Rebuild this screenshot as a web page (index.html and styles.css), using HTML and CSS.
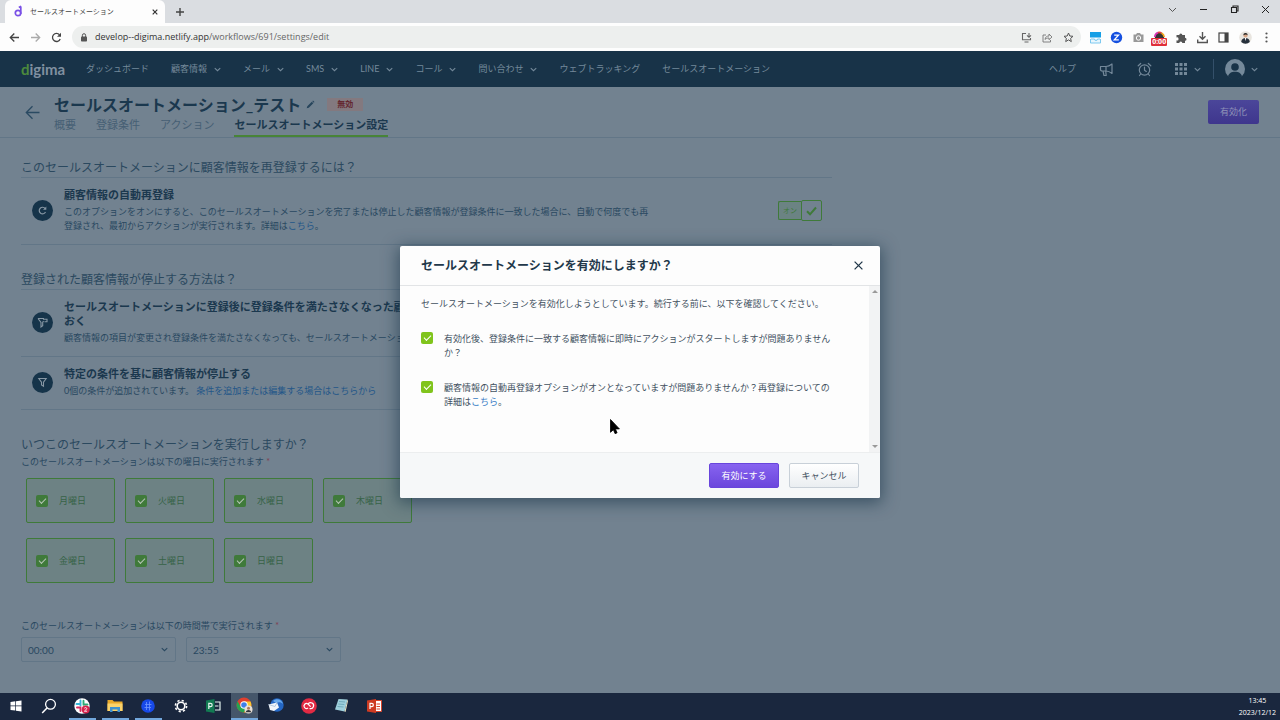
FILE: index.html
```html
<!DOCTYPE html>
<html lang="ja">
<head>
<meta charset="utf-8">
<title>セールスオートメーション</title>
<link rel="stylesheet" href="styles.css">
</head>
<body>
<svg class="defs" aria-hidden="true">
  <symbol id="chev" viewBox="0 0 8 8"><path d="M1.2 2.6 4 5.4 6.8 2.6" fill="none" stroke="currentColor" stroke-width="1.2" stroke-linecap="round"/></symbol>
</svg>

<header class="browser">
  <div class="tabstrip">
    <div class="tab">
      <svg width="9" height="13" viewBox="0 0 9 13"><circle cx="4" cy="8" r="2.7" fill="none" stroke="#7a50e6" stroke-width="1.7"/><path d="M6.8 1.5V9M4.800 2.600l2.400-1.400" stroke="#7a50e6" stroke-width="1.7" fill="none"/></svg>
      <span class="tab-title">セールスオートメーション</span>
      <button class="icon-btn" aria-label="タブを閉じる"><svg width="8" height="8" viewBox="0 0 8 8"><path d="M1.7 1.7l4.6 4.6M6.3 1.7 1.7 6.3" stroke="#333" stroke-width="1.2"/></svg></button>
    </div>
    <button class="icon-btn new-tab" aria-label="新しいタブ"><svg width="10" height="10" viewBox="0 0 10 10"><path d="M5 1v8M1 5h8" stroke="#444" stroke-width="1.4"/></svg></button>
    <div class="window-controls">
      <button class="icon-btn" aria-label="タブを検索"><svg width="9" height="9" viewBox="0 0 9 9"><path d="M1 3l3.500 3.500L8 3" fill="none" stroke="#555" stroke-width="1"/></svg></button>
      <button class="icon-btn" aria-label="最小化"><svg width="9" height="9" viewBox="0 0 9 9"><path d="M1 4.500h7" stroke="#222" stroke-width="1"/></svg></button>
      <button class="icon-btn" aria-label="元に戻す"><svg width="9" height="9" viewBox="0 0 9 9"><path d="M1.500 2.500h5v5h-5zM3 2.500V1h5v5H6.500" fill="none" stroke="#222" stroke-width="1.1"/></svg></button>
      <button class="icon-btn" aria-label="閉じる"><svg width="9" height="9" viewBox="0 0 9 9"><path d="M1 1l7 7M8 1 1 8" stroke="#222" stroke-width="1"/></svg></button>
    </div>
  </div>
  <div class="toolbar">
    <div class="nav-buttons">
      <button class="icon-btn" aria-label="戻る"><svg width="11" height="11" viewBox="0 0 11 11"><path d="M10 5.500H1.500M5.300 1.500l-4 4 4 4" fill="none" stroke="#444" stroke-width="1.3"/></svg></button>
      <button class="icon-btn" aria-label="進む"><svg width="11" height="11" viewBox="0 0 11 11"><path d="M1 5.500h8.500M5.700 1.500l4 4-4 4" fill="none" stroke="#aaa" stroke-width="1.3"/></svg></button>
      <button class="icon-btn" aria-label="再読み込み"><svg width="11" height="11" viewBox="0 0 11 11"><path d="M9.200 7A4 4 0 1 1 8.500 2.800" fill="none" stroke="#444" stroke-width="1.3"/><path d="M10 .7v4H6z" fill="#444"/></svg></button>
    </div>
    <div class="omnibox">
      <svg width="8" height="9" viewBox="0 0 8 9"><rect x="1" y="3.500" width="6" height="5" rx=".8" fill="#555"/><path d="M2.400 4V2.300a1.600 1.600 0 0 1 3.200 0V4" fill="none" stroke="#555" stroke-width="1"/></svg>
      <span class="url"><span class="host">develop--digima.netlify.app</span>/workflows/691/settings/edit</span>
      <div class="omni-icons">
        <svg width="11" height="11" viewBox="0 0 11 11"><path d="M5 1.500H1.500v6.300h8V6M3.500 10h4M8 1v4M6 3.300l2 2 2-2" fill="none" stroke="#666" stroke-width="1.1"/></svg>
        <svg width="11" height="11" viewBox="0 0 11 11"><path d="M4 3H1v7h7.500V8M3 7.500C3.300 4.800 5 4 7 4V2l3 3-3 2.700V6C5.200 6 4 6.300 3 7.500z" fill="none" stroke="#777" stroke-width=".9"/></svg>
        <svg width="11" height="11" viewBox="0 0 11 11"><path d="M5.500 1l1.300 3 3.200.3-2.400 2.100.7 3.200-2.800-1.700-2.800 1.700.7-3.200L1 4.300 4.200 4z" fill="none" stroke="#555" stroke-width="1"/></svg>
      </div>
    </div>
    <div class="extensions">
      <svg width="13" height="13" viewBox="0 0 13 13"><rect x="1" y="1" width="11" height="5.500" fill="#169fe6"/><path d="M1.500 8v4h10V8M2 8h3.500a1.500 1.500 0 0 0 3 0H11" fill="#e8f6fd" stroke="#6fc3ee" stroke-width=".9"/></svg>
      <svg width="13" height="13" viewBox="0 0 13 13"><circle cx="6.500" cy="6.500" r="5.700" fill="#1650e0"/><path d="M4.200 4.200h4.300L4.300 8.800h4.500" fill="none" stroke="#fff" stroke-width="1.300"/></svg>
      <svg width="13" height="13" viewBox="0 0 13 13"><path d="M1.500 3.500H4L5 2h3l1 1.500h2.500V11h-10z" fill="#999"/><circle cx="6.500" cy="7" r="2.200" fill="none" stroke="#fff"/></svg>
      <div class="recorder">
        <svg width="13" height="13" viewBox="0 0 13 13"><circle cx="6.500" cy="6" r="4.700" fill="#333"/><path d="M1.800 6a4.700 4.700 0 0 1 3.200-4.400" stroke="#d935b4" fill="none" stroke-width="1.700"/><path d="M5 1.600a5 5 0 0 1 3.500.3" stroke="#e9413b" fill="none" stroke-width="1.700"/><path d="M8.500 1.900A5 5 0 0 1 11.200 6" stroke="#f3a51c" fill="none" stroke-width="1.700"/></svg>
        <span class="rec-time">0:00</span>
      </div>
      <svg width="13" height="13" viewBox="0 0 13 13"><path d="M1.500 4h2.800a1.500 1.500 0 1 1 3 0H10v2.700a1.500 1.500 0 1 1 0 3V12H7.300a1.500 1.500 0 1 0-3 0H1.500V9.300a1.500 1.500 0 1 0 0-2.800z" fill="#555"/></svg>
      <svg width="13" height="13" viewBox="0 0 13 13"><path d="M6.500 1v7M3.500 5.300l3 3 3-3M1.700 8.500v3h9.600v-3" fill="none" stroke="#555" stroke-width="1.400"/></svg>
      <svg width="13" height="13" viewBox="0 0 13 13"><rect x="2" y="2" width="9" height="9" fill="none" stroke="#444" stroke-width="1.200"/><path d="M7.500 2H11v9H7.500z" fill="#444"/></svg>
      <svg width="13" height="13" viewBox="0 0 13 13"><circle cx="6.500" cy="6.500" r="6.300" fill="#e8e5df"/><path d="M2.200 11c.5-3 2-4 4.300-4s4 1 4.300 4a6.300 6.300 0 0 1-8.600 0z" fill="#26303b"/><circle cx="6.500" cy="4.500" r="2.100" fill="#d8a889"/><path d="M4.300 4.300a2.200 2.200 0 0 1 4.400 0C7.500 3 6 3.300 4.300 4.300z" fill="#222"/><path d="M5.800 7h1.400l-.5 3z" fill="#fff"/></svg>
      <svg width="13" height="13" viewBox="0 0 13 13" fill="#555"><circle cx="6.500" cy="2.500" r="1.100"/><circle cx="6.500" cy="6.500" r="1.100"/><circle cx="6.500" cy="10.500" r="1.100"/></svg>
    </div>
  </div>
</header>

<div class="app">
  <nav class="app-nav">
    <a class="logo" href="#"><span class="logo-d">d</span>igima</a>
    <div class="menu">
      <a href="#">ダッシュボード</a>
      <a href="#">顧客情報<svg class="chev"><use href="#chev"/></svg></a>
      <a href="#">メール<svg class="chev"><use href="#chev"/></svg></a>
      <a href="#">SMS<svg class="chev"><use href="#chev"/></svg></a>
      <a href="#">LINE<svg class="chev"><use href="#chev"/></svg></a>
      <a href="#">コール<svg class="chev"><use href="#chev"/></svg></a>
      <a href="#">問い合わせ<svg class="chev"><use href="#chev"/></svg></a>
      <a href="#">ウェブトラッキング</a>
      <a href="#">セールスオートメーション</a>
    </div>
    <div class="tools">
      <a href="#">ヘルプ</a>
      <a href="#" aria-label="お知らせ"><svg width="15" height="15" viewBox="0 0 15 15" fill="none" stroke="currentColor" stroke-width="1.200" stroke-linejoin="round"><path d="M1.500 4.500H7c2.300 0 4.500-1.300 6-2.500v9.500c-1.500-1.200-3.700-2.500-6-2.500H2.500L1.500 8zM7 4.500V9M4 9l1 4.500h2.200L6.700 9"/></svg></a>
      <a href="#" aria-label="リマインダー"><svg width="15" height="15" viewBox="0 0 15 15" fill="none" stroke="currentColor" stroke-width="1.200" stroke-linecap="round"><circle cx="7.500" cy="8" r="5.200"/><path d="M7.500 5v3.200l1.800 1.200M1.200 3.800 3.700 1.500M13.800 3.800l-2.500-2.300M3.700 12l-1.200 1.500M11.300 12l1.200 1.500"/></svg></a>
      <a href="#" aria-label="アプリ"><svg width="12" height="12" viewBox="0 0 12 12" fill="currentColor"><path d="M0 0h3v3H0zM4.500 0h3v3h-3zM9 0h3v3H9zM0 4.500h3v3H0zM4.500 4.500h3v3h-3zM9 4.500h3v3H9zM0 9h3v3H0zM4.500 9h3v3h-3zM9 9h3v3H9z"/></svg><svg class="chev"><use href="#chev"/></svg></a>
      <a class="account" href="#" aria-label="アカウント"><svg width="20" height="20" viewBox="0 0 20 20"><circle cx="10" cy="10" r="10" fill="currentColor"/><circle cx="10" cy="8" r="3.800" fill="#183348"/><path d="M3 17.500c1-3.500 3.500-4.800 7-4.800s6 1.300 7 4.800L13 20H7z" fill="#183348"/></svg><svg class="chev"><use href="#chev"/></svg></a>
    </div>
  </nav>

  <div class="page-head">
    <a class="back" href="#" aria-label="一覧に戻る"><svg width="15" height="15" viewBox="0 0 15 15"><path d="M14.500 7.500H1.500M7.500 1.200l-6.200 6.300 6.200 6.300" fill="none" stroke="#2a4a62" stroke-width="1.300"/></svg></a>
    <div class="head-main">
      <div class="title-row">
        <h1>セールスオートメーション_テスト</h1>
        <button class="icon-btn" aria-label="名前を編集"><svg width="9" height="9" viewBox="0 0 9 9"><path d="M.7 8.300l.6-2.100 4.500-4.500 1.500 1.500-4.500 4.500zM6.300 1.200 7 .5l1.500 1.500-.7.700z" fill="#27455c"/></svg></button>
        <span class="badge">無効</span>
      </div>
      <div class="tabs">
        <a href="#">概要</a>
        <a href="#">登録条件</a>
        <a href="#">アクション</a>
        <a class="active" href="#">セールスオートメーション設定</a>
      </div>
    </div>
    <button class="enable">有効化</button>
  </div>

  <main class="content">
    <section>
      <h2 class="ruled">このセールスオートメーションに顧客情報を再登録するには？</h2>
      <div class="row">
        <span class="disc"><svg width="11" height="11" viewBox="0 0 11 11"><path d="M8.500 7A3.300 3.300 0 1 1 8.200 3.600" fill="none" stroke="currentColor" stroke-width="1.200"/><path d="M9.300 1.500v3.300H6z" fill="currentColor"/></svg></span>
        <div class="row-text">
          <h3>顧客情報の自動再登録</h3>
          <p>このオプションをオンにすると、このセールスオートメーションを完了または停止した顧客情報が登録条件に一致した場合に、自動で何度でも再登録され、最初からアクションが実行されます。詳細は<a href="#">こちら</a>。</p>
        </div>
        <button class="switch" role="switch" aria-checked="true" aria-label="顧客情報の自動再登録"><span class="switch-label">オン</span><span class="knob"><svg width="11" height="10" viewBox="0 0 11 10"><path d="M1 5.300 4 8.300 10 1.500" fill="none" stroke="currentColor" stroke-width="2"/></svg></span></button>
      </div>
    </section>

    <section>
      <h2 class="ruled">登録された顧客情報が停止する方法は？</h2>
      <div class="row">
        <span class="disc"><svg width="11" height="11" viewBox="0 0 11 11" fill="none" stroke="currentColor" stroke-width="1.100"><path d="M1 1.500h6M1 1.500l3 4V10l1.700-1.200V5.500L6.500 4M6 2.200h4v2.600H7.500"/></svg></span>
        <div class="row-text">
          <h3>セールスオートメーションに登録後に登録条件を満たさなくなった顧客情報をそのままセールスオートメーションに残しておく</h3>
          <p>顧客情報の項目が変更され登録条件を満たさなくなっても、セールスオートメーションを継続します。</p>
        </div>
      </div>
      <div class="row">
        <span class="disc"><svg width="11" height="11" viewBox="0 0 11 11"><path d="M1.800 1.500h7.400L6.500 5.300v4L4.500 8V5.300z" fill="none" stroke="currentColor" stroke-width="1.100"/></svg></span>
        <div class="row-text">
          <h3>特定の条件を基に顧客情報が停止する</h3>
          <p>0個の条件が追加されています。 <a href="#">条件を追加または編集する場合はこちらから</a></p>
        </div>
      </div>
    </section>

    <section>
      <h2>いつこのセールスオートメーションを実行しますか？</h2>
      <p class="field-label">このセールスオートメーションは以下の曜日に実行されます <span class="req">*</span></p>
      <div class="days">
        <label class="day"><input type="checkbox" class="check" checked>月曜日</label>
        <label class="day"><input type="checkbox" class="check" checked>火曜日</label>
        <label class="day"><input type="checkbox" class="check" checked>水曜日</label>
        <label class="day"><input type="checkbox" class="check" checked>木曜日</label>
        <label class="day"><input type="checkbox" class="check" checked>金曜日</label>
        <label class="day"><input type="checkbox" class="check" checked>土曜日</label>
        <label class="day"><input type="checkbox" class="check" checked>日曜日</label>
      </div>
      <p class="field-label" id="hours">このセールスオートメーションは以下の時間帯で実行されます <span class="req">*</span></p>
      <div class="times">
        <div class="select"><select aria-labelledby="hours"><option>00:00</option></select><svg class="chev"><use href="#chev"/></svg></div>
        <div class="select"><select aria-labelledby="hours"><option>23:55</option></select><svg class="chev"><use href="#chev"/></svg></div>
      </div>
    </section>
  </main>

  <div class="overlay">
    <div class="dialog" role="dialog" aria-modal="true" aria-labelledby="dlg-title">
      <div class="dialog-head">
        <h2 id="dlg-title">セールスオートメーションを有効にしますか？</h2>
        <button class="icon-btn" aria-label="閉じる"><svg width="9" height="9" viewBox="0 0 9 9"><path d="M.6.6l7.800 7.800M8.400.6.6 8.400" stroke="#22384a" stroke-width="1.300"/></svg></button>
      </div>
      <div class="dialog-body">
        <div class="dialog-text">
          <p>セールスオートメーションを有効化しようとしています。続行する前に、以下を確認してください。</p>
          <div class="confirm"><input type="checkbox" class="check" id="c1" checked><label for="c1">有効化後、登録条件に一致する顧客情報に即時にアクションがスタートしますが問題ありませんか？</label></div>
          <div class="confirm"><input type="checkbox" class="check" id="c2" checked><label for="c2">顧客情報の自動再登録オプションがオンとなっていますが問題ありませんか？再登録についての詳細は<a href="#">こちら</a>。</label></div>
        </div>
        <div class="scrollbar"><span class="up"></span><span class="down"></span></div>
      </div>
      <div class="dialog-foot">
        <button class="btn primary">有効にする</button>
        <button class="btn">キャンセル</button>
      </div>
    </div>
    <svg class="cursor" width="11" height="16" viewBox="0 0 11 16"><path d="M.5.5v12.800l2.900-2.600 1.700 4 2-.9-1.700-3.900h4z" fill="#000" stroke="#000" stroke-width=".8"/></svg>
  </div>
</div>

<footer class="taskbar">
  <div class="apps">
    <button aria-label="スタート"><svg width="12" height="12" viewBox="0 0 12 12" fill="#fff"><path d="M.5 2 5.300 1.300v4.300H.5zM6 1.200l5.500-.8v5.200H6zM.5 6.300h4.800v4.300L.5 10zM6 6.300h5.500v5.200L6 10.700z"/></svg></button>
    <button aria-label="検索"><svg width="16" height="16" viewBox="0 0 16 16"><circle cx="9.500" cy="6.300" r="4.900" fill="none" stroke="#fff" stroke-width="1.300"/><path d="M6 10 1.200 15" stroke="#fff" stroke-width="1.500"/></svg></button>
    <button class="running" aria-label="Slack"><svg width="16" height="16" viewBox="0 0 16 16"><circle cx="8" cy="8" r="7.700" fill="#fff"/><path d="M6.500 2.500v5M2.500 6H6" stroke="#36b5d8" stroke-width="1.900" stroke-linecap="round"/><path d="M9.500 2.800v4M10 6.500h3.500" stroke="#2bab76" stroke-width="1.900" stroke-linecap="round"/><path d="M3 9.500h3.500v3.500" stroke="#d62a5c" stroke-width="1.900" fill="none" stroke-linecap="round"/><circle cx="11.700" cy="11.500" r="4" fill="#d7234d"/><path d="M10.300 10.300c.8-1.200 2.700-.8 2.300.5-.2.700-1.300 1.500-2.200 2.400h2.700" fill="none" stroke="#fff" stroke-width=".9"/></svg></button>
    <button class="running" aria-label="エクスプローラー"><svg width="16" height="14" viewBox="0 0 16 14"><path d="M.5 1h5l1.500 1.500h8.500V12H.5z" fill="#e9a92b"/><path d="M.5 4.500h15V12H.5z" fill="#fbd36b"/><path d="M3 13V8h10v5h-2.500v-2.500h-5V13z" fill="#3e91cf"/></svg></button>
    <button class="running" aria-label="通話"><svg width="14" height="14" viewBox="0 0 14 14"><circle cx="7" cy="7" r="6.800" fill="#1749e8"/><path d="M5.500 3v8M8.500 2.500v9M4 5.500h6.500M3.500 8.500H10" stroke="#6f96ff" stroke-width=".8"/></svg></button>
    <button aria-label="設定"><svg width="14" height="14" viewBox="0 0 14 14" fill="none" stroke="#fff"><circle cx="7" cy="7" r="3.800" stroke-width="1.600"/><circle cx="7" cy="7" r="5.600" stroke-width="1.600" stroke-dasharray="2.200 2.200"/></svg></button>
    <button aria-label="Project"><svg width="15" height="14" viewBox="0 0 15 14"><path d="M0 1.500 8.500 0v14L0 12.500z" fill="#127a52"/><path d="M2.800 10V4.300h1.700a1.600 1.600 0 0 1 0 3.300H3M9 3h5v8H9M9 7h3.500" fill="none" stroke="#e4f5ee" stroke-width="1.200"/></svg></button>
    <button class="running current" aria-label="Chrome"><svg width="17" height="17" viewBox="0 0 17 17"><circle cx="8" cy="8" r="7.500" fill="#e0402f"/><path d="M1.500 4.300A7.500 7.500 0 0 0 8 15.500L11.300 9.800 4.700 9.800z" fill="#27a351"/><path d="M8 15.500A7.500 7.500 0 0 0 14.500 4.500H8l3.300 5.300z" fill="#f9c82e"/><circle cx="8" cy="8" r="3.700" fill="#fff"/><circle cx="8" cy="8" r="2.800" fill="#3d7fe8"/><circle cx="12.500" cy="12.500" r="4" fill="#e7e0d7"/><circle cx="12.500" cy="11.300" r="1.500" fill="#ab7556"/><path d="M9.800 15.200c.4-3 4.900-3 5.400 0z" fill="#30343b"/></svg></button>
    <button aria-label="Thunderbird"><svg width="16" height="15" viewBox="0 0 16 15"><circle cx="9" cy="7" r="6.700" fill="#2467c4"/><path d="M5 3c3-3 9-2 10 3-2-2-4-2.500-7-1z" fill="#68a9ec"/><path d="M.5 6.500 9 4.500l2 5-5 3.500-4-1z" fill="#f1f5fa"/><path d="M.5 6.500 7 8.500l2-4" fill="none" stroke="#a6bdd7" stroke-width=".8"/></svg></button>
    <button aria-label="Creative Cloud"><svg width="16" height="16" viewBox="0 0 16 16"><circle cx="8" cy="8" r="7.800" fill="#e22a43"/><path d="M6.700 10.200A2.500 2.500 0 1 1 7 6l2.300 2.300M7.300 5.700A3 3 0 1 1 9 10.600" fill="none" stroke="#fff" stroke-width="1.200" stroke-linecap="round"/></svg></button>
    <button aria-label="メモ帳"><svg width="15" height="15" viewBox="0 0 15 15"><path d="M4.500 1 13.500 1.500 10.500 13.500 1 11.500z" fill="#9fd0dc"/><path d="M13.500 1.500 14 3l-2.500 11-1-.5z" fill="#efe8c5"/><path d="M5 3.500l6 .5M4.300 6l6 .5M3.500 8.500l6 .5" stroke="#5a9aab" stroke-width=".7"/></svg></button>
    <button aria-label="PowerPoint"><svg width="15" height="14" viewBox="0 0 15 14"><path d="M8 1.500h6.500v11H8z" fill="#fff" stroke="#d8442b"/><path d="M9.500 5H13M9.500 7.500H13M9.500 10H13" stroke="#d8442b"/><path d="M0 1.500 9 0v14L0 12.500z" fill="#ce3b22"/><path d="M3 10V4.300h1.700a1.600 1.600 0 0 1 0 3.300H3.200" fill="none" stroke="#fff" stroke-width="1.200"/></svg></button>
  </div>
  <div class="clock"><span>13:45</span><span>2023/12/12</span></div>
</footer>
</body>
</html>
```
FILE: styles.css
```css
:root {
  --ink: #1b384e;
  --text: #294860;
  --muted: #465f74;
  --page: #728290;
  --line: #627687;
  --link: #235688;
  --green: #3f7a3a;
  --navy: #183348;
}

* { box-sizing: border-box; }

body {
  margin: 0;
  height: 100vh;
  display: flex;
  flex-direction: column;
  font: 9px/14px Lato, "Noto Sans CJK JP", sans-serif;
  color: var(--text);
}

h1, h2, h3, p { margin: 0; }
a { text-decoration: none; color: inherit; }
button { font: inherit; color: inherit; padding: 0; border: 0; background: none; }
svg { display: block; flex: none; }
.defs { position: absolute; width: 0; height: 0; }
.chev { width: 7px; height: 7px; }
.icon-btn { display: flex; align-items: center; justify-content: center; }

/* Browser frame */
.browser { background: #dadde1; font-family: "Open Sans", "Noto Sans CJK JP", sans-serif; }
.tabstrip { display: flex; align-items: center; height: 23px; padding: 0 10px 0 5px; }
.tab {
  display: flex; align-items: center; gap: 7px;
  width: 160px; height: 23px; padding: 0 6px 0 9px;
  background: #fdfdfd; border-radius: 6px 6px 0 0;
}
.tab-title { flex: 1; font-size: 7px; color: #444; }
.new-tab { margin-left: 10px; }
.window-controls { display: flex; gap: 22px; margin-left: auto; margin-bottom: 4px; }
.toolbar { display: flex; align-items: center; height: 28px; padding: 0 7px 0 9px; background: #fdfdfd; }
.nav-buttons { display: flex; gap: 10px; width: 63px; }
.omnibox {
  flex: 1; display: flex; align-items: center; gap: 7px;
  height: 22px; padding: 0 7px 0 8px; border-radius: 11px; background: #edefee;
}
.url { flex: 1; font-size: 9px; color: #666; }
.host { color: #333; }
.omni-icons { display: flex; gap: 10px; }
.extensions { display: flex; justify-content: space-between; width: 192px; padding-left: 8px; }
.recorder { position: relative; }
.rec-time {
  position: absolute; left: -2px; top: 7px; padding: 0 1px;
  font-size: 7px; line-height: 8px; font-weight: 700;
  color: #fff; background: #e0303a; border-radius: 1px;
}

/* Application */
.app { position: relative; flex: 1; min-height: 0; overflow: hidden; background: var(--page); }
.app-nav {
  display: flex; align-items: center; height: 36px; padding: 0 22px 0 21px;
  background: var(--navy); color: #74899a;
}
.app-nav a { display: flex; align-items: center; gap: 7px; white-space: nowrap; }
.app-nav .logo { gap: 0; width: 65px; font-size: 15px; font-weight: 700; color: #8090a0; }
.logo-d { color: #4c8a3c; }
.menu { display: flex; gap: 22px; }
.tools { display: flex; align-items: center; gap: 23px; margin-left: auto; }
.tools .account { padding-left: 11px; margin-left: -11px; border-left: 1px solid #34506a; gap: 6px; }

.page-head {
  display: flex; align-items: center; height: 51px; padding: 0 21px 0 25px;
  border-bottom: 1px solid var(--line);
}
.head-main { flex: 1; margin-left: 14px; align-self: stretch; padding-top: 8px; }
.title-row { display: flex; align-items: center; gap: 5px; height: 19px; }
h1 { font-size: 16px; line-height: 19px; color: var(--ink); }
.badge {
  margin-left: 7px; padding: 0 10px;
  font-size: 8px; line-height: 13px; font-weight: 700; color: #63262f; background: #83797f;
}
.tabs { display: flex; gap: 20px; font-size: 11px; line-height: 22px; color: var(--muted); }
.tabs a { height: 23px; }
.tabs .active { color: var(--ink); font-weight: 700; border-bottom: 2px solid #488438; }
.enable {
  width: 51px; height: 24px; border-radius: 2px; color: #8f93b8;
  background: linear-gradient(#4b469a, #3f368d);
}

.content { max-width: 832px; padding: 21px 0 0 21px; }
section + section { margin-top: 26px; }
.content h2 { font-size: 12px; line-height: 18px; font-weight: 400; color: #2b495f; }
.content .ruled { border-bottom: 1px solid var(--line); }
.row {
  display: flex; align-items: center; padding: 10px 10px 11px 11px;
  border-bottom: 1px solid var(--line);
}
.disc {
  flex: none; display: flex; align-items: center; justify-content: center;
  width: 21px; height: 21px; margin-right: 11px; border-radius: 50%;
  background: #16344a; color: #8797a4;
}
.row-text { max-width: 608px; }
.row h3 { margin-bottom: 3px; font-size: 11px; line-height: 14px; color: var(--ink); }
.row p { max-width: 65em; }
.row a { color: var(--link); }
.switch {
  display: flex; align-items: center; margin-left: auto; color: var(--green);
}
.switch-label {
  width: 23px; height: 19px; font-size: 7px; line-height: 17px; text-align: center;
  border: 1px solid var(--green); border-right: 0; border-radius: 2px 0 0 2px; background: #6b8383;
}
.knob {
  display: flex; align-items: center; justify-content: center;
  width: 21px; height: 21px; border: 1px solid var(--green); border-radius: 2px; background: var(--page);
}

.field-label { margin-top: 1px; }
.req { color: #803e50; }
.days {
  display: grid; grid-template-columns: repeat(4, 89px); gap: 15px 10px;
  margin: 9px 0 36px 5px;
}
.day {
  display: flex; align-items: center; gap: 11px; height: 45px; padding-left: 9px;
  border: 1px solid var(--green); border-radius: 2px; background: #6d8284; color: #376347;
}
.check {
  appearance: none; flex: none; width: 12px; height: 12px; margin: 0; border-radius: 2px;
  background: var(--green); display: grid; place-items: center;
}
.check::before {
  content: ""; width: 6px; height: 3px; margin-bottom: 2px;
  border: solid #b5c4b4; border-width: 0 0 1px 1px; rotate: -45deg;
}
.times { display: flex; gap: 10px; margin-top: 4px; }
.select { position: relative; width: 155px; }
.select select {
  appearance: none; width: 100%; height: 25px; padding: 0 6px; font: inherit; font-size: 10px; color: var(--text);
  background: transparent; border: 1px solid var(--line); border-radius: 2px;
}
.select .chev { position: absolute; right: 8px; top: 9px; pointer-events: none; }

/* Confirmation dialog */
.overlay { position: absolute; inset: 0; display: flex; align-items: center; justify-content: center; }
.dialog {
  width: 480px; overflow: hidden; border-radius: 2px; background: #fdfdfd; color: #42515f;
  box-shadow: 0 3px 16px 2px rgba(24, 51, 72, .6);
}
.dialog-head {
  display: flex; align-items: center; justify-content: space-between;
  height: 40px; padding: 0 17px 0 21px; border-bottom: 1px solid #e2e4e6;
}
.dialog-head h2 { font-size: 12px; line-height: 18px; color: #22384a; }
.dialog-body { display: flex; }
.dialog-text { flex: 1; padding: 11px 0 43px 21px; }
.confirm { display: flex; align-items: flex-start; gap: 11px; margin-top: 21px; }
.confirm label { max-width: 43em; }
.confirm a { color: #3a7ec6; }
.dialog .check { background: #80c41c; }
.dialog .check::before { border-color: #fff; }
.scrollbar {
  display: flex; flex-direction: column; justify-content: space-between; align-items: center;
  width: 11px; padding: 4px 0; background: #f2f3f4;
}
.up, .down { border: 3px solid transparent; }
.up { border-top: 0; border-bottom-color: #999; }
.down { border-bottom: 0; border-top-color: #999; }
.dialog-foot {
  display: flex; justify-content: flex-end; gap: 10px; padding: 10px 21px;
  background: #f6f8f9; border-top: 1px solid #eceeef;
}
.btn {
  width: 70px; height: 25px; border: 1px solid #c8d0d8; border-radius: 2px;
  background: linear-gradient(#fff, #eaeef1); color: #42515f;
}
.btn.primary { border-color: #6845dc; color: #fff; background: linear-gradient(#8763f0, #6b47dc); }
.cursor { position: absolute; left: 610px; top: 368px; }

/* Taskbar */
.taskbar {
  display: flex; justify-content: space-between; height: 27px; padding-right: 4px;
  background: #1a273e; color: #fff;
}
.apps { display: flex; width: 391px; }
.apps button { flex: 1; display: flex; align-items: center; justify-content: center; border-bottom: 2px solid transparent; margin: 0 3px; }
.apps .running { border-bottom-color: #72a7dc; }
.apps .current { margin: 0 1px; background: #45566a; }
.clock {
  display: flex; flex-direction: column; align-items: center; padding-top: 2px;
  font: 7px/12px "Open Sans", sans-serif;
}
```
